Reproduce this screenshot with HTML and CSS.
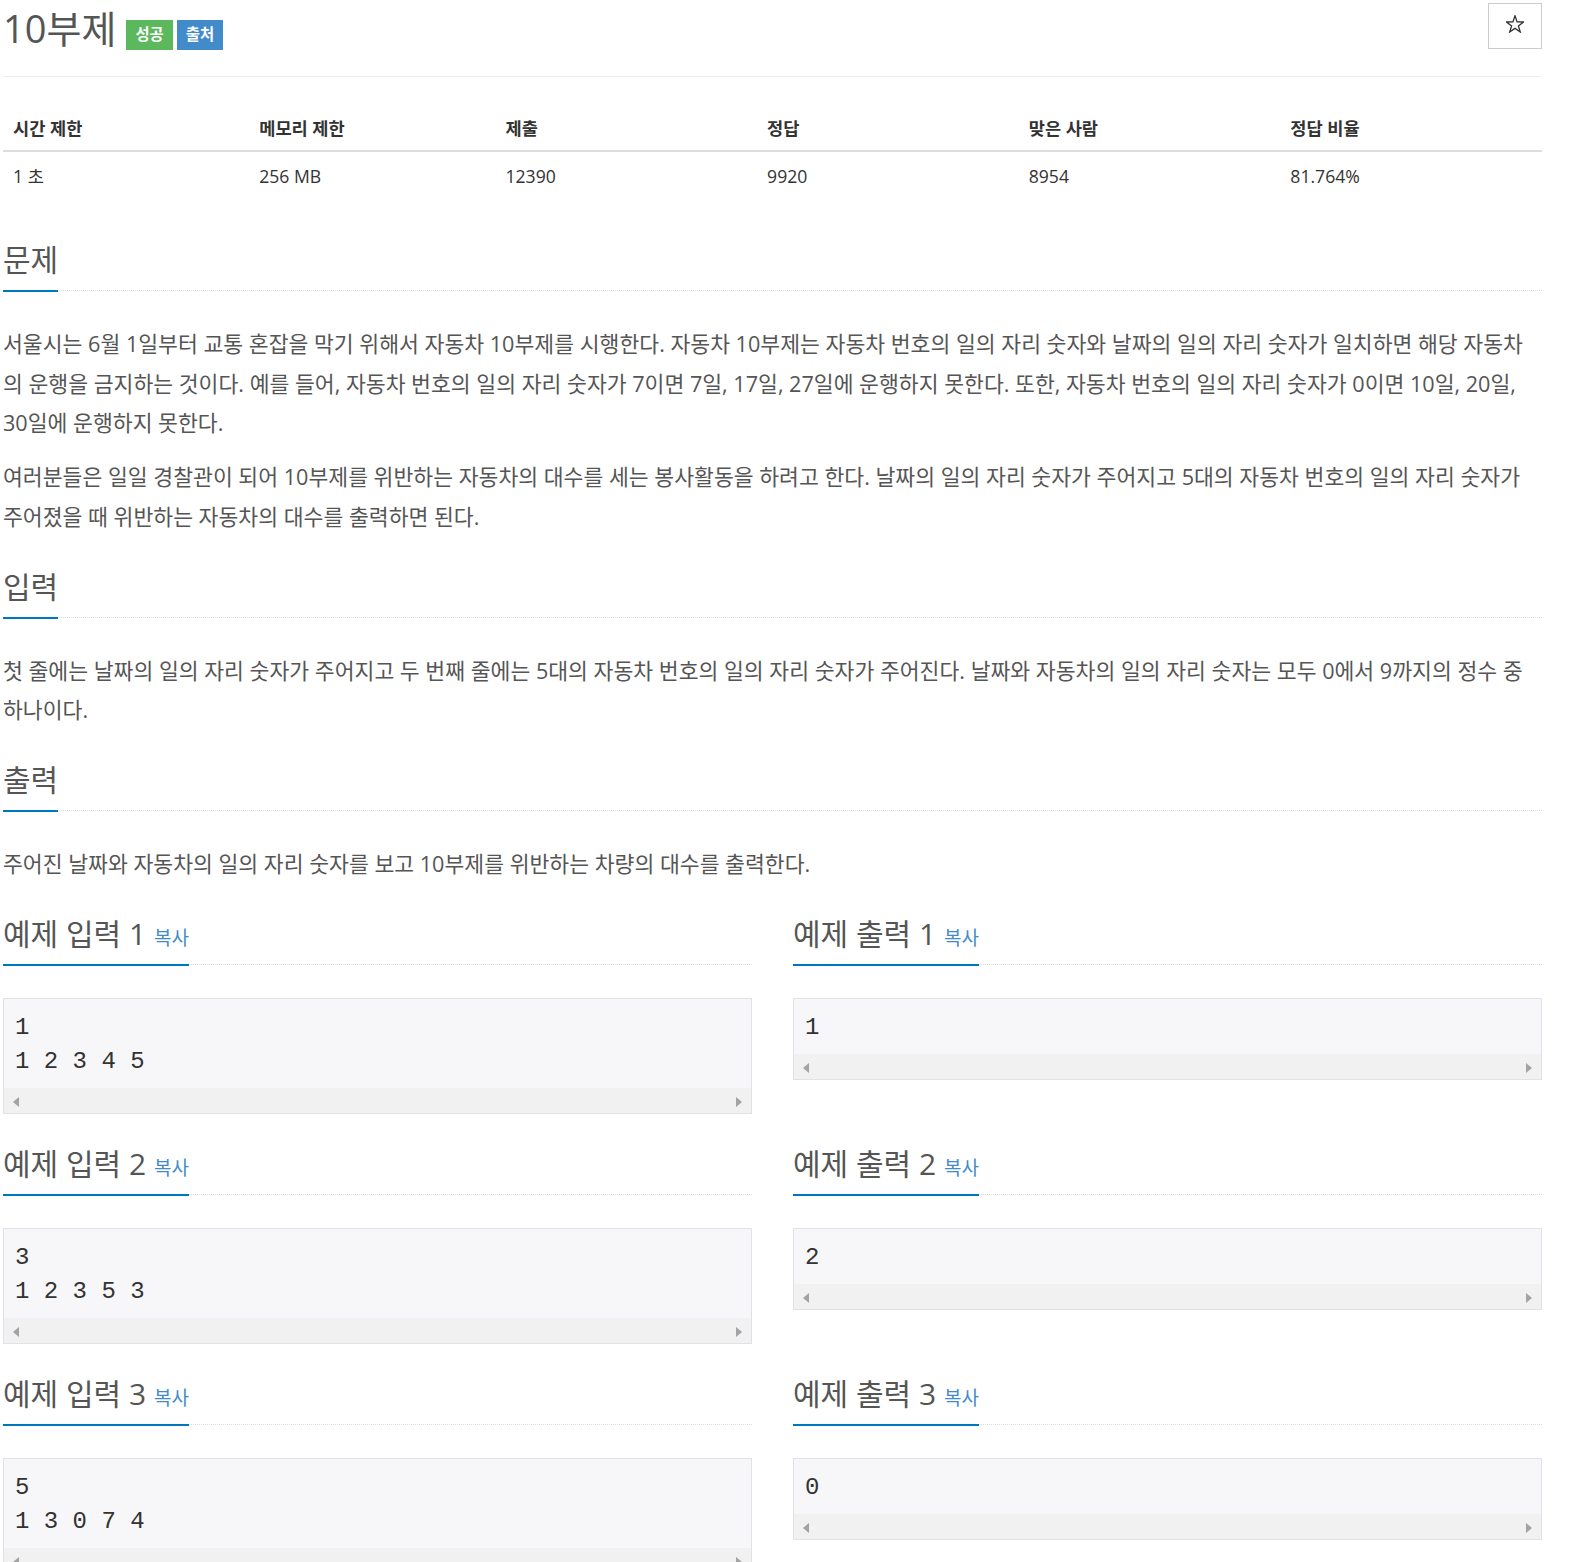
FILE: index.html
```html
<!DOCTYPE html>
<html lang="ko">
<head>
    <meta charset="UTF-8">
    <title>10부제</title>
    <link rel="stylesheet" href="styles.css">
</head>
<body>
    <div class="container">
        <!-- Title row -->
        <div class="page-header">
            <h1 class="problem-title">10부제</h1>
            <div class="problem-labels">
                <span class="label label-success">성공</span>
                <span class="label label-primary">출처</span>
            </div>
            <button type="button" class="btn-star" title="즐겨찾기">
                <svg width="18" height="18" viewBox="0 0 18 18">
                    <path d="M9 0.8 L11.1 6.9 L17.5 7 L12.4 10.9 L14.3 17 L9 13.4 L3.7 17 L5.6 10.9 L0.5 7 L6.9 6.9 Z" fill="none" stroke="#333" stroke-width="1.3" stroke-linejoin="miter"/>
                </svg>
            </button>
        </div>

        <!-- Limits -->
        <table class="problem-info">
            <colgroup>
                <col class="col-narrow"><col class="col-narrow">
                <col class="col-wide"><col class="col-wide"><col class="col-wide"><col class="col-wide">
            </colgroup>
            <thead>
                <tr><th>시간 제한</th><th>메모리 제한</th><th>제출</th><th>정답</th><th>맞은 사람</th><th>정답 비율</th></tr>
            </thead>
            <tbody>
                <tr><td>1 초</td><td>256 MB</td><td>12390</td><td>9920</td><td>8954</td><td>81.764%</td></tr>
            </tbody>
        </table>

        <section class="problem-section">
            <div class="headline"><h2>문제</h2></div>
            <div class="problem-text">
                <p>서울시는 6월 1일부터 교통 혼잡을 막기 위해서 자동차 10부제를 시행한다. 자동차 10부제는 자동차 번호의 일의 자리 숫자와 날짜의 일의 자리 숫자가 일치하면 해당 자동차의 운행을 금지하는 것이다. 예를 들어, 자동차 번호의 일의 자리 숫자가 7이면 7일, 17일, 27일에 운행하지 못한다. 또한, 자동차 번호의 일의 자리 숫자가 0이면 10일, 20일, 30일에 운행하지 못한다.</p>
                <p>여러분들은 일일 경찰관이 되어 10부제를 위반하는 자동차의 대수를 세는 봉사활동을 하려고 한다. 날짜의 일의 자리 숫자가 주어지고 5대의 자동차 번호의 일의 자리 숫자가 주어졌을 때 위반하는 자동차의 대수를 출력하면 된다.</p>
            </div>
        </section>

        <section class="problem-section">
            <div class="headline"><h2>입력</h2></div>
            <div class="problem-text">
                <p>첫 줄에는 날짜의 일의 자리 숫자가 주어지고 두 번째 줄에는 5대의 자동차 번호의 일의 자리 숫자가 주어진다. 날짜와 자동차의 일의 자리 숫자는 모두 0에서 9까지의 정수 중 하나이다.</p>
            </div>
        </section>

        <section class="problem-section">
            <div class="headline"><h2>출력</h2></div>
            <div class="problem-text">
                <p>주어진 날짜와 자동차의 일의 자리 숫자를 보고 10부제를 위반하는 차량의 대수를 출력한다.</p>
            </div>
        </section>

        <!-- Samples -->
        <div class="sample-grid">
            <section class="sample-section">
                <div class="headline"><h2>예제 입력 1 <button type="button" class="copy-button">복사</button></h2></div>
                <div class="sample-box">
                    <pre class="sampledata">1
1 2 3 4 5</pre>
                    <div class="scrollbar"><span class="arrow arrow-left"></span><span class="arrow arrow-right"></span></div>
                </div>
            </section>
            <section class="sample-section">
                <div class="headline"><h2>예제 출력 1 <button type="button" class="copy-button">복사</button></h2></div>
                <div class="sample-box">
                    <pre class="sampledata">1</pre>
                    <div class="scrollbar"><span class="arrow arrow-left"></span><span class="arrow arrow-right"></span></div>
                </div>
            </section>

            <section class="sample-section">
                <div class="headline"><h2>예제 입력 2 <button type="button" class="copy-button">복사</button></h2></div>
                <div class="sample-box">
                    <pre class="sampledata">3
1 2 3 5 3</pre>
                    <div class="scrollbar"><span class="arrow arrow-left"></span><span class="arrow arrow-right"></span></div>
                </div>
            </section>
            <section class="sample-section">
                <div class="headline"><h2>예제 출력 2 <button type="button" class="copy-button">복사</button></h2></div>
                <div class="sample-box">
                    <pre class="sampledata">2</pre>
                    <div class="scrollbar"><span class="arrow arrow-left"></span><span class="arrow arrow-right"></span></div>
                </div>
            </section>

            <section class="sample-section">
                <div class="headline"><h2>예제 입력 3 <button type="button" class="copy-button">복사</button></h2></div>
                <div class="sample-box">
                    <pre class="sampledata">5
1 3 0 7 4</pre>
                    <div class="scrollbar"><span class="arrow arrow-left"></span><span class="arrow arrow-right"></span></div>
                </div>
            </section>
            <section class="sample-section">
                <div class="headline"><h2>예제 출력 3 <button type="button" class="copy-button">복사</button></h2></div>
                <div class="sample-box">
                    <pre class="sampledata">0</pre>
                    <div class="scrollbar"><span class="arrow arrow-left"></span><span class="arrow arrow-right"></span></div>
                </div>
            </section>
        </div>
    </div>
</body>
</html>
```

FILE: styles.css
```css
:root {
    --text-color: #333;
    --heading-color: #555;
    --headline-blue: #0076c0;
    --link-blue: #428bca;
    --sample-bg: #f7f7f9;
    --sample-border: #e1e1e8;
}

* {
    box-sizing: border-box;
}

body {
    margin: 0;
    font-family: "Open Sans", "Noto Sans CJK KR", sans-serif;
    color: var(--text-color);
    background-color: #fff;
}

.container {
    width: 1539px;
    margin-left: 3px;
    display: flex;
    flex-direction: column;
}

/* Title row */
.page-header {
    display: flex;
    align-items: flex-start;
    height: 77px;
    border-bottom: 1px solid #eee;
}

.problem-title {
    margin: 7px 10px 0 0;
    font-size: 38px;
    line-height: 42px;
    font-weight: normal;
    color: var(--heading-color);
}

.problem-labels {
    display: flex;
    gap: 4px;
    margin-top: 20px;
}

.label {
    display: block;
    height: 30px;
    padding: 0 9px;
    line-height: 30px;
    font-size: 15.4px;
    font-weight: bold;
    color: #fff;
}

.label-success {
    background-color: #5cb85c;
}

.label-primary {
    background-color: var(--link-blue);
}

.btn-star {
    margin: 3px 0 0 auto;
    width: 54px;
    height: 46px;
    padding: 0 0 5px;
    border: 1px solid #ccc;
    background-color: #fff;
    display: flex;
    align-items: center;
    justify-content: center;
    cursor: pointer;
}

/* Limits table */
.problem-info {
    width: 100%;
    margin: 29px 0 24px;
    border-collapse: collapse;
    table-layout: fixed;
}

.col-narrow {
    width: 16%;
}

.col-wide {
    width: 17%;
}

.problem-info th {
    text-align: left;
    font-size: 17.6px;
    line-height: 22px;
    padding: 11px 10px;
    border-bottom: 2px solid #ddd;
}

.problem-info td {
    font-size: 17.6px;
    line-height: 24px;
    padding: 12px 10px;
}

/* Section headings */
.headline {
    display: flex;
    margin: 14px 0 33px;
    border-bottom: 1px dotted #ddd;
}

.headline h2 {
    margin: 0 0 -2px;
    padding: 2px 0 10px;
    border-bottom: 2px solid var(--headline-blue);
    font-size: 30px;
    line-height: 40px;
    font-weight: normal;
    color: var(--heading-color);
}

.copy-button {
    padding: 0;
    border: none;
    background: none;
    font-family: inherit;
    font-size: 19px;
    color: var(--link-blue);
    cursor: pointer;
}

.problem-text {
    padding-right: 10px;
    font-size: 21.6px;
    line-height: 39.6px;
    color: var(--heading-color);
}

.problem-text p {
    margin: 0 0 14.4px;
}

/* Samples */
.sample-grid {
    display: grid;
    grid-template-columns: 1fr 1fr;
    column-gap: 41px;
}

.sample-box {
    margin-bottom: 14px;
    border: 1px solid var(--sample-border);
    background-color: var(--sample-bg);
}

.sampledata {
    margin: 0;
    padding: 12px 11px 9px;
    font-family: "Liberation Mono", monospace;
    font-size: 24px;
    line-height: 34px;
    color: var(--text-color);
    white-space: pre;
    overflow: hidden;
}

.scrollbar {
    height: 25px;
    padding: 2px 9px 0;
    display: flex;
    align-items: center;
    justify-content: space-between;
    background-color: #f1f1f1;
}

.arrow {
    width: 0;
    height: 0;
    border-top: 5px solid transparent;
    border-bottom: 5px solid transparent;
}

.arrow-left {
    border-right: 6px solid #a3a3a3;
}

.arrow-right {
    border-left: 6px solid #a3a3a3;
}
```
